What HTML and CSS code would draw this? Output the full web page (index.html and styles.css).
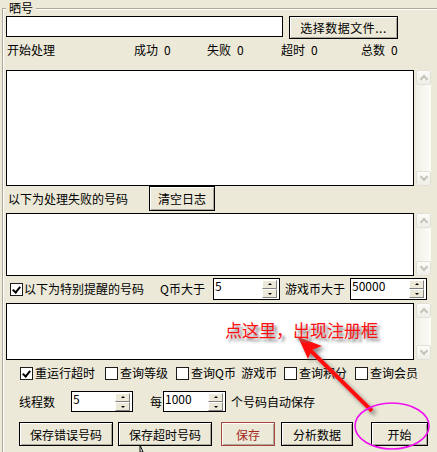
FILE: index.html
```html
<!DOCTYPE html>
<html lang="zh-CN">
<head>
    <meta charset="UTF-8">
    <link rel="stylesheet" href="styles.css">
    <title>晒号</title>
</head>
<body>
    <div class="group">
        <span class="legend">晒号</span>

        <div class="file-row">
            <input class="edit file-path" type="text">
            <button class="btn pick">选择数据文件...</button>
        </div>

        <div class="stats">
            <span class="s-start">开始处理</span>
            <span class="s-ok">成功<b>0</b></span>
            <span class="s-fail">失败<b>0</b></span>
            <span class="s-timeout">超时<b>0</b></span>
            <span class="s-total">总数<b>0</b></span>
        </div>

        <div class="log log-main">
            <div class="log-box"></div>
            <div class="vscroll"><span class="sb up"></span><span class="sb down"></span></div>
        </div>

        <div class="fail-row">
            <span class="fail-label">以下为处理失败的号码</span>
            <button class="btn clear">清空日志</button>
        </div>

        <div class="log log-fail">
            <div class="log-box"></div>
            <div class="vscroll"><span class="sb up"></span><span class="sb down"></span></div>
        </div>

        <div class="remind-row">
            <span class="check on"></span>
            <span class="remind-label">以下为特别提醒的号码</span>
            <span class="q-label">Q币大于</span>
            <div class="spin spin-q">
                <input class="spin-val" type="text" value="5">
                <div class="spin-btns"><span class="sp up"></span><span class="sp down"></span></div>
            </div>
            <span class="g-label">游戏币大于</span>
            <div class="spin spin-g">
                <input class="spin-val" type="text" value="50000">
                <div class="spin-btns"><span class="sp up"></span><span class="sp down"></span></div>
            </div>
        </div>

        <div class="log log-extra">
            <div class="log-box"></div>
            <div class="vscroll"><span class="sb up"></span><span class="sb down"></span></div>
        </div>

        <div class="opts">
            <label class="opt opt1"><span class="check on"></span>重运行超时</label>
            <label class="opt opt2"><span class="check"></span>查询等级</label>
            <label class="opt opt3"><span class="check"></span>查询Q币&nbsp;&nbsp;游戏币</label>
            <label class="opt opt4"><span class="check"></span>查询积分</label>
            <label class="opt opt5"><span class="check"></span>查询会员</label>
        </div>

        <div class="thread-row">
            <span class="th-label">线程数</span>
            <div class="spin spin-th">
                <input class="spin-val" type="text" value="5">
                <div class="spin-btns"><span class="sp up"></span><span class="sp down"></span></div>
            </div>
            <span class="every">每</span>
            <div class="spin spin-every">
                <input class="spin-val" type="text" value="1000">
                <div class="spin-btns"><span class="sp up"></span><span class="sp down"></span></div>
            </div>
            <span class="auto-save">个号码自动保存</span>
        </div>

        <div class="actions">
            <button class="btn b-err">保存错误号码</button>
            <button class="btn b-to">保存超时号码</button>
            <button class="btn b-save">保存</button>
            <button class="btn b-ana">分析数据</button>
            <button class="btn b-start">开始</button>
        </div>
    </div>

    <!-- 标注：箭头、圈 -->
    <svg class="marks" width="437" height="452" viewBox="0 0 437 452">
        <defs>
            <filter id="shadow" x="-20%" y="-20%" width="140%" height="140%">
                <feDropShadow dx="3" dy="3" stdDeviation="2" flood-color="#666" flood-opacity="0.8"/>
            </filter>
        </defs>
        <g filter="url(#shadow)">
            <line x1="372" y1="411" x2="309" y2="349" stroke="#ff1010" stroke-width="4"/>
            <polygon points="298,337 322,346 312,350 308,359" fill="#ff1010"/>
        </g>
        <ellipse cx="392" cy="426" rx="37" ry="23" fill="none" stroke="#f010f0" stroke-width="1.6"/>
        <path d="M140 445 L140 452 L143 452 Z" fill="#fff" stroke="#000" stroke-width="1"/>
    </svg>
    <div class="note">点这里，出现注册框</div>
</body>
</html>
```

FILE: styles.css
```css
* {
    box-sizing: border-box;
}

body {
    margin: 0;
    height: 452px;
    overflow: hidden;
    position: relative;
    background-color: #ECE9D8;
    color: #000;
    font-family: "Noto Sans CJK SC", "Liberation Sans", sans-serif;
    font-size: 12px;
    line-height: 14px;
}

input, button {
    font-family: inherit;
    font-size: 12px;
    color: #000;
    margin: 0;
}

.group {
    position: relative;
    margin: 8px 0 0 2px;
    width: 435px;
    height: 444px;
    padding-left: 3px;
    border-top: 1px solid #aca899;
    border-left: 1px solid #aca899;
    box-shadow: inset 1px 1px 0 #fff;
}

.legend {
    position: absolute;
    top: -8px;
    left: 3px;
    padding: 0 3px;
    background-color: #ECE9D8;
}

/* 通用控件 */
.edit {
    display: block;
    border: 1px solid #000;
    background-color: #fff;
    padding: 0 2px;
    outline: none;
}

.btn {
    display: block;
    padding: 0;
    background-color: #ECE9D8;
    border: 1px solid #000;
    box-shadow: inset 1px 1px 0 #fff, inset -1px -1px 0 #aca899;
    text-align: center;
    cursor: pointer;
}

.check {
    display: inline-block;
    flex: none;
    width: 13px;
    height: 13px;
    border: 1px solid #1c1c1c;
    background-color: #fff;
    position: relative;
}

.check.on::after {
    content: "";
    position: absolute;
    left: 3px;
    top: 1px;
    width: 3px;
    height: 6px;
    border: solid #000;
    border-width: 0 2px 2px 0;
    transform: rotate(40deg);
}

/* 第一行 */
.file-row {
    display: flex;
    margin-top: 7px;
    height: 23px;
}

.file-path {
    width: 277px;
    height: 21px;
}

.pick {
    margin-left: 6px;
    width: 109px;
    height: 23px;
    letter-spacing: 0.5px;
}

.stats {
    display: flex;
    margin-top: 4px;
    height: 14px;
    padding-left: 1px;
}

.stats b {
    font-weight: normal;
    margin-left: 6px;
}

.s-start { width: 127px; }
.s-ok { width: 73px; }
.s-fail { width: 74px; }
.s-timeout { width: 80px; }

/* 日志框 */
.log {
    display: flex;
}

.log-box {
    width: 408px;
    height: 100%;
    border: 1px solid #000;
    background-color: #fff;
}

.vscroll {
    margin-left: 2px;
    width: 15px;
    height: 100%;
    display: flex;
    flex-direction: column;
    justify-content: space-between;
    background: linear-gradient(to right, #f1efe6, #fcfcf9);
}

.sb {
    position: relative;
    display: block;
    height: 15px;
    border: 1px solid #e2e0d6;
    border-radius: 2px;
    background: linear-gradient(#fbfbf8, #efeee7);
}

.sb::after {
    content: "";
    position: absolute;
    left: 4px;
    width: 4px;
    height: 4px;
    border: solid #c6c4b8;
    border-width: 2px 0 0 2px;
}

.sb.up::after {
    top: 5px;
    transform: rotate(45deg);
}

.sb.down::after {
    top: 2px;
    transform: rotate(225deg);
}

.log-main {
    margin-top: 13px;
    height: 116px;
}

.fail-row {
    display: flex;
    align-items: center;
    height: 25px;
}

.fail-label {
    width: 143px;
    padding-left: 2px;
}

.clear {
    width: 66px;
    height: 25px;
}

.log-fail {
    margin-top: 2px;
    height: 63px;
}

/* 提醒行 */
.remind-row {
    display: flex;
    align-items: center;
    margin-top: 2px;
    height: 22px;
    padding-left: 4px;
}

.remind-label {
    margin-left: 1px;
    width: 136px;
}

.q-label {
    width: 53px;
}

.g-label {
    margin-left: 5px;
    width: 65px;
}

.spin {
    display: flex;
    align-items: center;
    height: 22px;
    border: 1px solid #000;
    background-color: #fff;
}

.spin-val {
    flex: 1;
    min-width: 0;
    height: 14px;
    border: none;
    padding: 0 0 0 1px;
    background: transparent;
    outline: none;
    line-height: 14px;
    align-self: flex-start;
}

.spin-btns {
    display: flex;
    flex-direction: column;
    width: 15px;
    margin-right: 2px;
}

.sp {
    position: relative;
    display: block;
    height: 9px;
    background-color: #ECE9D8;
    border: 1px solid;
    border-color: #fff #808080 #808080 #fff;
}

.sp::after {
    content: "";
    position: absolute;
    left: 5px;
    border-left: 2px solid transparent;
    border-right: 2px solid transparent;
}

.sp.up::after {
    top: 2px;
    border-bottom: 2px solid #000;
}

.sp.down::after {
    top: 3px;
    border-top: 2px solid #000;
}

.spin-q { width: 67px; }
.spin-g { width: 77px; }

.log-extra {
    margin-top: 3px;
    height: 57px;
}

/* 选项 */
.opts {
    display: flex;
    align-items: center;
    margin-top: 5px;
    height: 16px;
    padding-left: 14px;
}

.opt {
    display: flex;
    align-items: center;
    white-space: nowrap;
}

.opt .check {
    margin-right: 2px;
}

.opt1 { width: 85px; }
.opt2 { width: 71px; }
.opt3 { width: 108px; }
.opt4 { width: 71px; }

.thread-row {
    display: flex;
    align-items: center;
    margin-top: 10px;
    height: 21px;
    padding-left: 13px;
}

.th-label {
    width: 52px;
}

.spin-th {
    width: 62px;
    height: 21px;
}

.every {
    margin-left: 17px;
    width: 13px;
}

.spin-every {
    width: 63px;
    height: 21px;
}

.auto-save {
    margin-left: 5px;
}

/* 按钮 */
.actions {
    display: flex;
    margin-top: 10px;
    height: 24px;
    padding-left: 13px;
}

.actions .btn {
    height: 24px;
}

.b-err { width: 94px; }
.b-to { width: 94px; margin-left: 5px; }
.b-save {
    width: 54px;
    margin-left: 9px;
    color: #a52a22;
    border-color: #a8453c;
}
.b-ana { width: 72px; margin-left: 6px; }
.b-start { width: 57px; margin-left: 18px; }

/* 标注 */
.marks {
    position: absolute;
    top: 0;
    left: 0;
    pointer-events: none;
}

.note {
    position: absolute;
    left: 225px;
    top: 320px;
    font-size: 17px;
    line-height: 20px;
    color: #ff1010;
    text-shadow: 3px 3px 3px #777;
    pointer-events: none;
}
```
